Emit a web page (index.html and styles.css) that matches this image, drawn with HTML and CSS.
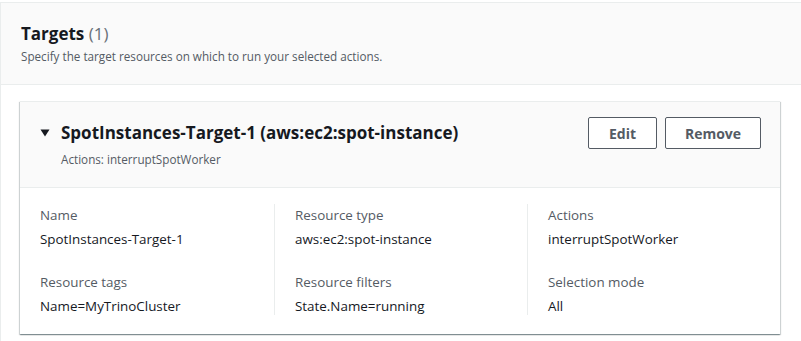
FILE: index.html
```html
<!DOCTYPE html>
<html lang="en">
<head>
    <meta charset="UTF-8">
    <meta name="viewport" content="width=device-width, initial-scale=1.0">
    <title>Targets</title>
    <link rel="stylesheet" href="styles.css">
</head>
<body>
    <div class="panel">
        <div class="panel-header">
            <h2>Targets <span class="count">(1)</span></h2>
            <p>Specify the target resources on which to run your selected actions.</p>
        </div>

        <div class="panel-body">
            <div class="target-card">
                <div class="target-header">
                    <div class="target-heading">
                        <h3>
                            <svg class="caret" width="10" height="8" viewBox="0 0 10 8">
                                <path d="M0.5 0.5 L9.5 0.5 L5 7.5 Z" fill="#16191f"/>
                            </svg>
                            SpotInstances-Target-1 (aws:ec2:spot-instance)
                        </h3>
                        <p>Actions: interruptSpotWorker</p>
                    </div>
                    <div class="target-actions">
                        <button class="btn btn-edit">Edit</button>
                        <button class="btn btn-remove">Remove</button>
                    </div>
                </div>

                <div class="target-details">
                    <div class="detail-col">
                        <div class="detail">
                            <div class="detail-label">Name</div>
                            <div class="detail-value">SpotInstances-Target-1</div>
                        </div>
                        <div class="detail">
                            <div class="detail-label">Resource tags</div>
                            <div class="detail-value">Name=MyTrinoCluster</div>
                        </div>
                    </div>
                    <div class="detail-col">
                        <div class="detail">
                            <div class="detail-label">Resource type</div>
                            <div class="detail-value">aws:ec2:spot-instance</div>
                        </div>
                        <div class="detail">
                            <div class="detail-label">Resource filters</div>
                            <div class="detail-value">State.Name=running</div>
                        </div>
                    </div>
                    <div class="detail-col">
                        <div class="detail">
                            <div class="detail-label">Actions</div>
                            <div class="detail-value">interruptSpotWorker</div>
                        </div>
                        <div class="detail">
                            <div class="detail-label">Selection mode</div>
                            <div class="detail-value">All</div>
                        </div>
                    </div>
                </div>
            </div>
        </div>
    </div>
</body>
</html>
```

FILE: styles.css
```css
* {
    box-sizing: border-box;
    margin: 0;
    padding: 0;
    font-family: 'Open Sans', 'Noto Sans', sans-serif;
}

body {
    background-color: #fff;
    color: #16191f;
    overflow: hidden;
    padding-top: 2px;
}

.panel {
    height: 339px;
    border-left: 1px solid #eaeded;
    border-top: 1px solid #eaeded;
}

.panel-header {
    background-color: #fafafa;
    border-bottom: 1px solid #eaeded;
    padding: 19px 20px 20px;
    height: 82px;
}

.panel-header h2 {
    font-size: 17px;
    font-weight: 700;
    line-height: 24px;
}

.panel-header .count {
    font-weight: 400;
    color: #687078;
}

.panel-header p {
    font-size: 11.7px;
    color: #545b64;
    line-height: 16px;
    margin-top: 2px;
}

.panel-body {
    padding: 16px 0 0 19px;
}

.target-card {
    width: 760px;
    background: #fff;
    border-top: 1px solid #eaeded;
    box-shadow: 0 1px 1px 0 rgba(0, 28, 36, 0.3), 1px 1px 1px 0 rgba(0, 28, 36, 0.15), -1px 1px 1px 0 rgba(0, 28, 36, 0.15);
}

.target-header {
    display: flex;
    justify-content: space-between;
    align-items: flex-start;
    background: #fafafa;
    border-bottom: 1px solid #eaeded;
    padding: 15px 19px 20px 20px;
}

.target-heading {
    padding-top: 4px;
}

.target-heading h3 {
    display: flex;
    align-items: center;
    gap: 11px;
    font-size: 17px;
    font-weight: 700;
    line-height: 24px;
}

.caret {
    display: block;
}

.target-heading p {
    font-size: 11.7px;
    color: #545b64;
    line-height: 16px;
    margin-top: 6px;
    padding-left: 21px;
}

.target-actions {
    display: flex;
    gap: 8px;
}

.btn {
    height: 32px;
    background: #fff;
    border: 1px solid #545b64;
    border-radius: 2px;
    color: #545b64;
    font-size: 14px;
    font-weight: 700;
    cursor: pointer;
}

.btn-edit {
    width: 69px;
}

.btn-remove {
    width: 96px;
}

.target-details {
    display: grid;
    grid-template-columns: 234px 253px 1fr;
    padding: 16px 20px 19px;
}

.detail-col {
    display: flex;
    flex-direction: column;
    gap: 23px;
}

.detail-col + .detail-col {
    border-left: 1px solid #eaeded;
    padding-left: 20px;
}

.detail-label {
    font-size: 13.4px;
    color: #545b64;
    line-height: 20px;
    margin-top: 1px;
    margin-bottom: 4px;
}

.detail-value {
    font-size: 13.4px;
    color: #16191f;
    line-height: 20px;
    margin-bottom: -1px;
}
```
